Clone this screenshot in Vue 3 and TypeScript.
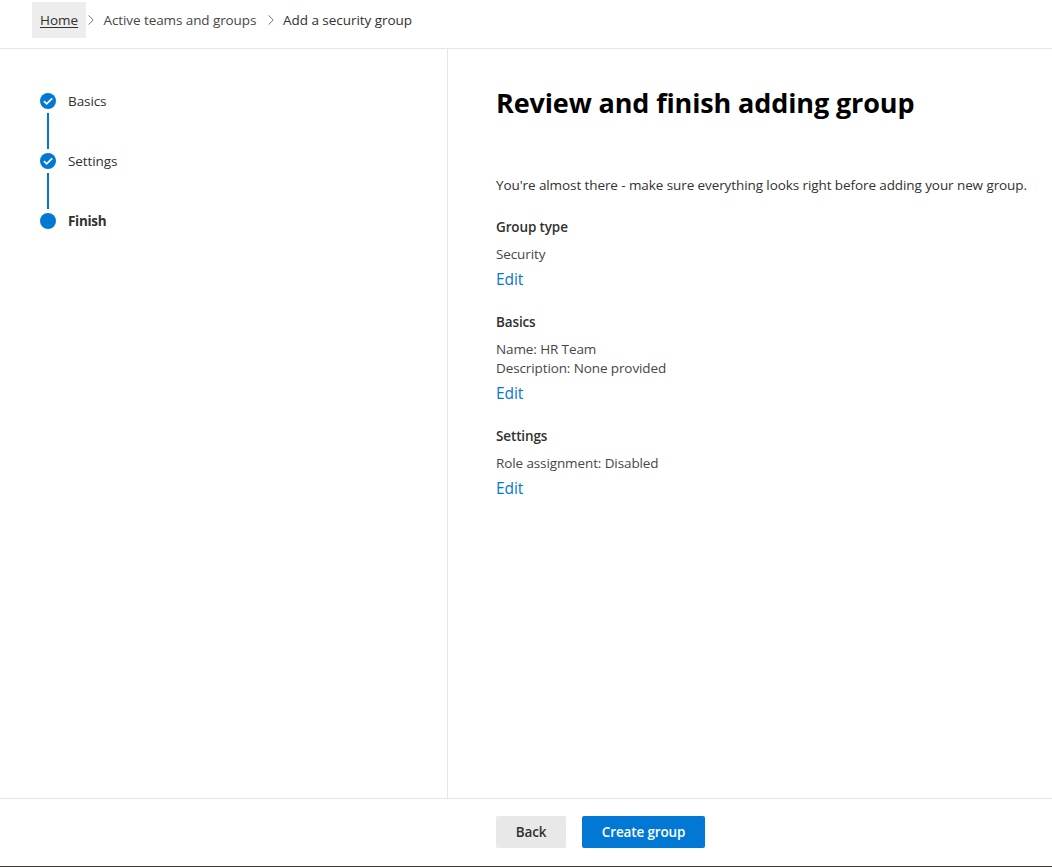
<script setup lang="ts">
interface Step {
  label: string
  status: 'done' | 'current'
}

interface Section {
  title: string
  lines: string[]
}

const steps: Step[] = [
  { label: 'Basics', status: 'done' },
  { label: 'Settings', status: 'done' },
  { label: 'Finish', status: 'current' }
]

const sections: Section[] = [
  { title: 'Group type', lines: ['Security'] },
  { title: 'Basics', lines: ['Name: HR Team', 'Description: None provided'] },
  { title: 'Settings', lines: ['Role assignment: Disabled'] }
]
</script>

<template>
  <div class="page">
    <nav class="breadcrumb">
      <a class="crumb home"><span class="home-text">Home</span></a>
      <svg class="chevron" width="6" height="10" viewBox="0 0 6 10">
        <path d="M0.6 0.4 L5.2 5 L0.6 9.6" />
      </svg>
      <a class="crumb parent">Active teams and groups</a>
      <svg class="chevron" width="6" height="10" viewBox="0 0 6 10">
        <path d="M0.6 0.4 L5.2 5 L0.6 9.6" />
      </svg>
      <span class="crumb active">Add a security group</span>
    </nav>

    <div class="body">
      <aside class="steps">
        <div v-for="step in steps" :key="step.label" class="step" :class="step.status">
          <div class="marker">
            <svg class="dot" width="16" height="16" viewBox="0 0 16 16">
              <circle cx="8" cy="8" r="8" />
              <path v-if="step.status === 'done'" d="M3.9 8.2 L6.6 10.9 L12.2 5.3" />
            </svg>
          </div>
          <span class="step-label">{{ step.label }}</span>
        </div>
      </aside>

      <main class="content">
        <h1>Review and finish adding group</h1>
        <p class="intro">You're almost there - make sure everything looks right before adding your new group.</p>
        <section v-for="section in sections" :key="section.title" class="section">
          <h2>{{ section.title }}</h2>
          <div v-for="line in section.lines" :key="line" class="line">{{ line }}</div>
          <a class="edit">Edit</a>
        </section>
      </main>
    </div>

    <footer class="footer">
      <button class="btn back">Back</button>
      <button class="btn primary">Create group</button>
    </footer>
  </div>
</template>

<style>
body {
  margin: 0;
  background: #fff;
}
</style>

<style scoped>
.page {
  display: flex;
  flex-direction: column;
  box-sizing: border-box;
  width: 100%;
  height: 100vh;
  overflow: hidden;
  border-bottom: 1px solid #3b3a39;
  background: #fff;
  color: #323130;
  font-family: "Segoe UI", "Open Sans", "Noto Sans", sans-serif;
  font-size: 13.5px;
  letter-spacing: -0.09px;
  white-space: nowrap;
}

.breadcrumb {
  display: flex;
  flex: none;
  align-items: center;
  box-sizing: border-box;
  height: 49px;
  padding: 0 0 9px 32px;
  border-bottom: 1px solid #e6e6e6;
}

.home {
  box-sizing: border-box;
  width: 54px;
  height: 36px;
  padding: 0 8px;
  background: #ededed;
  letter-spacing: 0;
  line-height: 36px;
}

.home-text {
  text-decoration: underline;
  text-underline-offset: 2px;
}

.parent {
  width: 162px;
  color: #484644;
}

.active {
  letter-spacing: -0.04px;
}

.chevron {
  margin: 0 9.5px 0 2px;
  fill: none;
  stroke: #797775;
  stroke-width: 1;
}

.body {
  display: flex;
  flex: 1;
  min-height: 0;
}

.steps {
  flex: none;
  box-sizing: border-box;
  width: 448px;
  padding: 42px 0 0 40px;
  border-right: 1px solid #e6e6e6;
}

.step {
  display: flex;
  height: 60px;
  line-height: 20px;
}

.marker {
  width: 16px;
  margin-right: 12px;
  padding-top: 2px;
}

.dot {
  display: block;
}

.dot circle {
  fill: #0078d4;
}

.dot path {
  fill: none;
  stroke: #fff;
  stroke-width: 1.7;
}

.done .marker::after {
  content: "";
  display: block;
  width: 2px;
  height: 36px;
  margin: 4px 7px 0;
  background: #0078d4;
}

.current .step-label {
  font-weight: 700;
  letter-spacing: -0.3px;
}

.content {
  padding: 34px 0 0 48px;
}

h1 {
  margin: 0;
  color: #000;
  font-size: 27px;
  font-weight: 700;
  letter-spacing: -0.13px;
  line-height: 40px;
}

.intro {
  margin: 52px 0 22px;
  line-height: 20px;
}

.section {
  margin-bottom: 22px;
}

h2 {
  margin: 0 0 8px;
  font-size: 13.5px;
  font-weight: 600;
  letter-spacing: -0.13px;
  line-height: 20px;
}

.line {
  color: #484644;
  letter-spacing: -0.11px;
  line-height: 19px;
}

.edit {
  display: block;
  margin: 5px 0 23px;
  color: #0078d4;
  font-size: 15.5px;
  line-height: 20px;
}

.footer {
  display: flex;
  flex: none;
  gap: 16px;
  box-sizing: border-box;
  height: 68px;
  padding: 17px 0 0 496px;
  border-top: 1px solid #e6e6e6;
}

.btn {
  height: 32px;
  padding: 0;
  border: 0;
  border-radius: 2px;
  font: inherit;
  font-weight: 600;
  letter-spacing: -0.15px;
}

.back {
  width: 70px;
  background: #e8e8e8;
  color: #323130;
}

.primary {
  width: 123px;
  background: #0078d4;
  color: #fff;
}
</style>
